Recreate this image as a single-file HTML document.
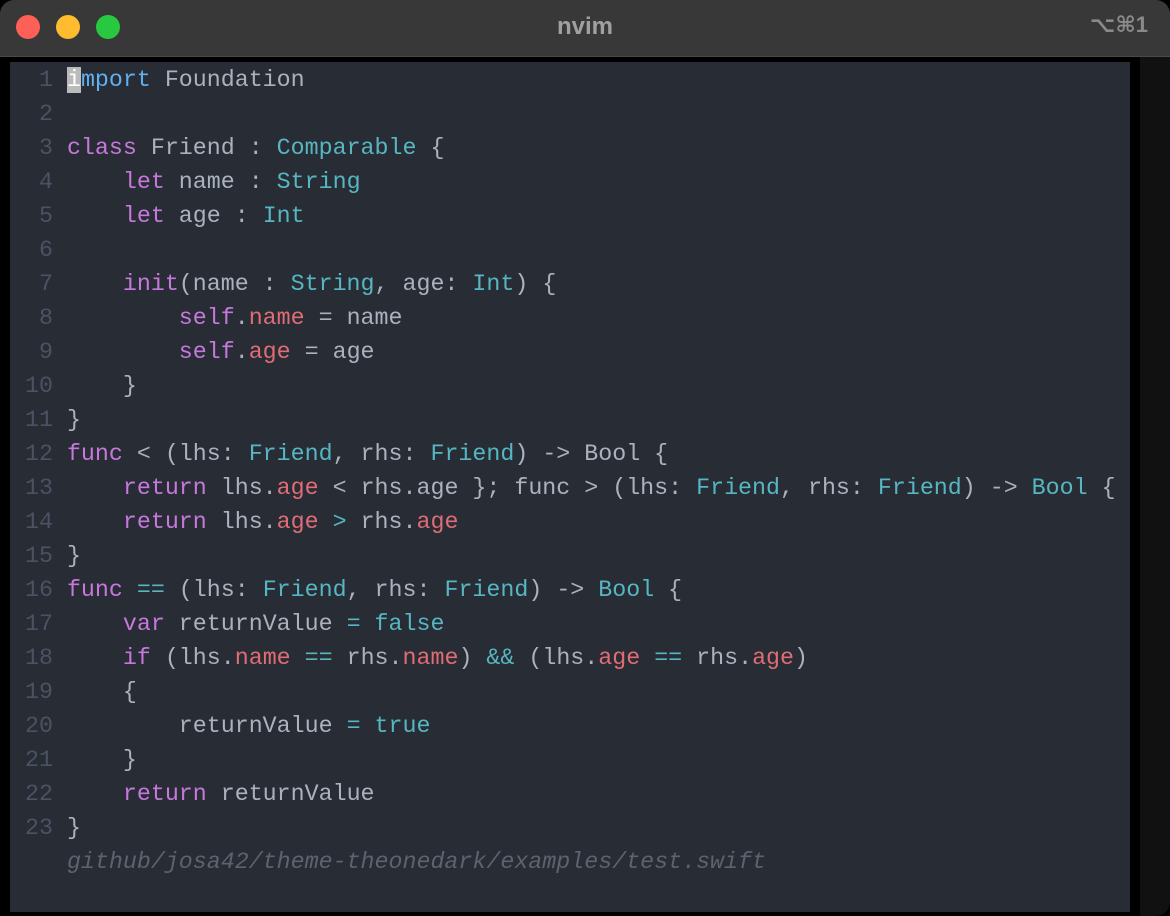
<!DOCTYPE html>
<html><head><meta charset="utf-8"><style>
html,body{margin:0;padding:0;background:#000;width:1170px;height:916px;overflow:hidden}
.win{position:absolute;left:0;top:0;width:1170px;height:916px;border-radius:14px;overflow:hidden;background:#000}
.tb{position:absolute;left:0;top:0;width:1170px;height:56px;background:#383838;border-bottom:1px solid #4a4a4a}
.dot{position:absolute;top:15px;width:24px;height:24px;border-radius:50%}
.title{position:absolute;left:0;width:1170px;top:13px;text-align:center;font:bold 24px "Liberation Sans",sans-serif;color:#a0a0a0}
.kb{position:absolute;right:22px;top:12px;font:bold 22px "Liberation Sans","DejaVu Sans",sans-serif;color:#8a8a8a}
.ed{position:absolute;left:10px;top:62px;width:1120px;height:850px;background:#282c34}
.side{position:absolute;left:1140px;top:57px;width:30px;height:859px;background:#111}
pre{margin:0;position:absolute;left:15px;top:1px;font:23.3px/34px "Liberation Mono",monospace;color:#abb2bf}
.n{color:#4b5263}.p{color:#c678dd}.b{color:#61afef}.c{color:#56b6c2}.r{color:#e06c75}
.cm{color:#5c6370;font-style:italic}
.cur{background:#bbb;color:#fff}
</style></head><body><div class="win">
<div class="tb"><div class="dot" style="left:16px;background:#fe5f57"></div><div class="dot" style="left:56px;background:#febc2e"></div><div class="dot" style="left:96px;background:#28c840"></div>
<div class="title">nvim</div><div class="kb">⌥⌘1</div></div>
<div class="ed"><pre><span class="n"> 1</span> <span class="cur">i</span><span class="b">mport</span> Foundation
<span class="n"> 2</span>
<span class="n"> 3</span> <span class="p">class</span> Friend : <span class="c">Comparable</span> {
<span class="n"> 4</span>     <span class="p">let</span> name : <span class="c">String</span>
<span class="n"> 5</span>     <span class="p">let</span> age : <span class="c">Int</span>
<span class="n"> 6</span>
<span class="n"> 7</span>     <span class="p">init</span>(name : <span class="c">String</span>, age: <span class="c">Int</span>) {
<span class="n"> 8</span>         <span class="p">self</span>.<span class="r">name</span> = name
<span class="n"> 9</span>         <span class="p">self</span>.<span class="r">age</span> = age
<span class="n">10</span>     }
<span class="n">11</span> }
<span class="n">12</span> <span class="p">func</span> &lt; (lhs: <span class="c">Friend</span>, rhs: <span class="c">Friend</span>) -&gt; Bool {
<span class="n">13</span>     <span class="p">return</span> lhs.<span class="r">age</span> &lt; rhs.age }; func &gt; (lhs: <span class="c">Friend</span>, rhs: <span class="c">Friend</span>) -&gt; <span class="c">Bool</span> {
<span class="n">14</span>     <span class="p">return</span> lhs.<span class="r">age</span> <span class="c">&gt;</span> rhs.<span class="r">age</span>
<span class="n">15</span> }
<span class="n">16</span> <span class="p">func</span> <span class="c">==</span> (lhs: <span class="c">Friend</span>, rhs: <span class="c">Friend</span>) -&gt; <span class="c">Bool</span> {
<span class="n">17</span>     <span class="p">var</span> returnValue <span class="c">=</span> <span class="c">false</span>
<span class="n">18</span>     <span class="p">if</span> (lhs.<span class="r">name</span> <span class="c">==</span> rhs.<span class="r">name</span>) <span class="c">&amp;&amp;</span> (lhs.<span class="r">age</span> <span class="c">==</span> rhs.<span class="r">age</span>)
<span class="n">19</span>     {
<span class="n">20</span>         returnValue <span class="c">=</span> <span class="c">true</span>
<span class="n">21</span>     }
<span class="n">22</span>     <span class="p">return</span> returnValue
<span class="n">23</span> }
   <span class="cm">github/josa42/theme-theonedark/examples/test.swift</span></pre></div>
<div class="side"></div>
</div></body></html>
